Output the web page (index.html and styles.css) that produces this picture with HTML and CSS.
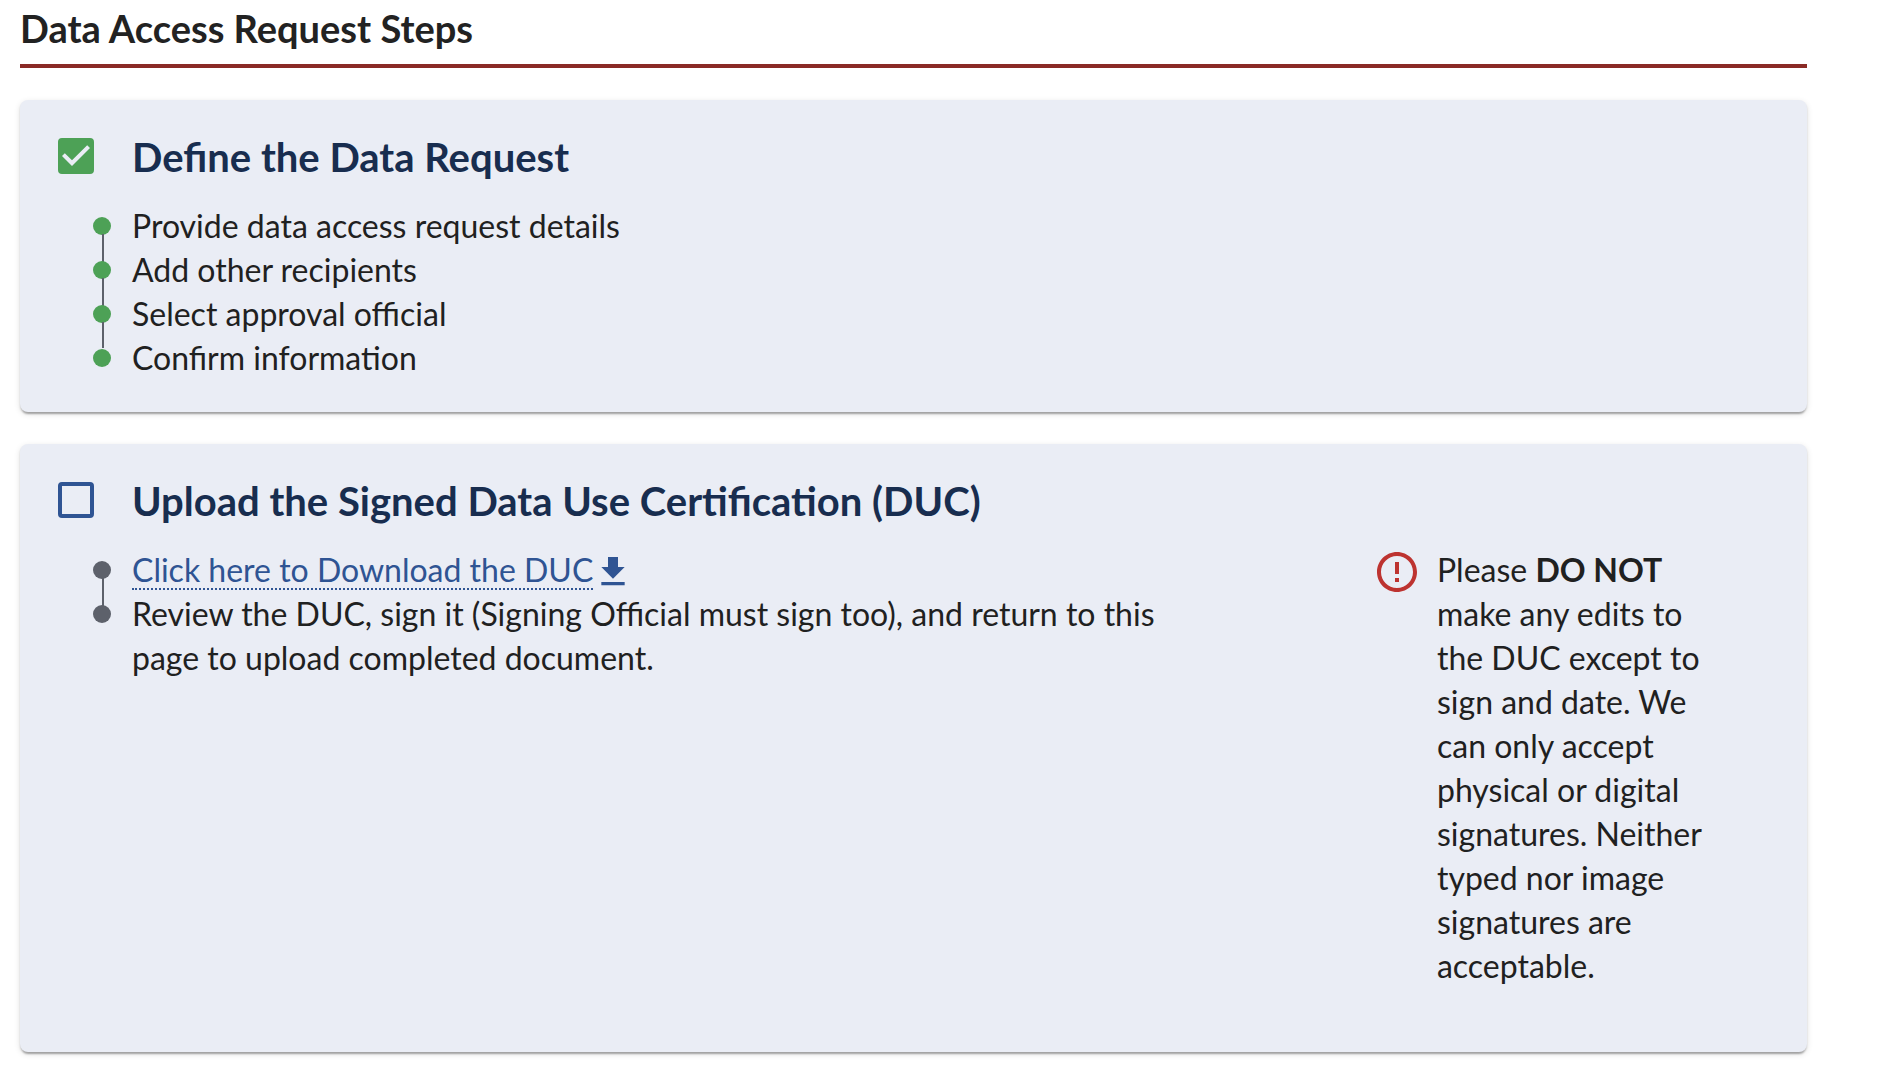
FILE: index.html
```html
<!DOCTYPE html>
<html lang="en">
<head>
<meta charset="utf-8">
<meta name="viewport" content="width=device-width, initial-scale=1">
<title>Data Access Request Steps</title>
<link rel="stylesheet" href="styles.css">
</head>
<body>
<main class="page">
  <h1 class="page-title">Data Access Request Steps</h1>

  <section class="card">
    <div class="card-head">
      <span class="check">
        <input class="check-input" type="checkbox" id="step-define" checked>
        <svg class="check-mark" viewBox="0 0 24 24" aria-hidden="true"><path d="M10 17l-5-5 1.41-1.41L10 14.17l7.59-7.59L19 8z"/></svg>
      </span>
      <h2 class="card-title"><label for="step-define">Define the Data Request</label></h2>
    </div>
    <ul class="steps steps-done">
      <li>Provide data access request details</li>
      <li>Add other recipients</li>
      <li>Select approval official</li>
      <li>Confirm information</li>
    </ul>
  </section>

  <section class="card">
    <div class="card-head">
      <span class="check">
        <input class="check-input" type="checkbox" id="step-upload">
        <svg class="check-mark" viewBox="0 0 24 24" aria-hidden="true"><path d="M10 17l-5-5 1.41-1.41L10 14.17l7.59-7.59L19 8z"/></svg>
      </span>
      <h2 class="card-title"><label for="step-upload">Upload the Signed Data Use Certification (DUC)</label></h2>
    </div>
    <div class="card-columns">
      <ul class="steps">
        <li>
          <div class="download">
            <a class="link" href="#">Click here to Download the DUC</a>
            <svg class="download-icon" viewBox="0 0 24 24" aria-hidden="true"><path d="M5 20h14v-2H5v2zM19 9h-4V3H9v6H5l7 7 7-7z"/></svg>
          </div>
        </li>
        <li>Review the DUC, sign it (Signing Official must sign too), and return to this page to upload completed document.</li>
      </ul>
      <aside class="notice">
        <svg class="notice-icon" viewBox="0 0 24 24" aria-hidden="true"><path d="M11 15h2v2h-2v-2zm0-8h2v6h-2V7zm.99-5C6.47 2 2 6.48 2 12s4.47 10 9.99 10C17.52 22 22 17.52 22 12S17.52 2 11.99 2zM12 20c-4.42 0-8-3.58-8-8s3.58-8 8-8 8 3.58 8 8-3.58 8-8 8z"/></svg>
        <p class="notice-text">Please <strong>DO NOT</strong> make any edits to the DUC except to sign and date. We can only accept physical or digital signatures. Neither typed nor image signatures are acceptable.</p>
      </aside>
    </div>
  </section>
</main>
</body>
</html>
```
FILE: styles.css
```css
* {
  box-sizing: border-box;
}

body {
  margin: 0;
  background: #fff;
  color: #1f2121;
  font-family: Lato, "Liberation Sans", sans-serif;
  font-size: 32px;
  line-height: 44px;
}

.page {
  display: flex;
  flex-direction: column;
  gap: 32px;
  padding: 0 81px 24px 20px;
}

.page-title {
  margin: 0;
  padding: 4px 0 12px;
  border-bottom: 4px solid #8a2a26;
  color: #222;
  font-size: 38px;
  line-height: 48px;
}

.card {
  display: flex;
  flex-direction: column;
  gap: 22px;
  padding: 32px;
  border-radius: 8px;
  background: #eaedf5;
  box-shadow:
    0 4px 2px -2px rgba(0, 0, 0, 0.2),
    0 2px 2px rgba(0, 0, 0, 0.14),
    0 2px 6px rgba(0, 0, 0, 0.12);
}

.card-head {
  display: flex;
  gap: 32px;
}

.check {
  display: grid;
  flex: none;
  width: 48px;
  height: 48px;
  place-items: center;
}

.check-input,
.check-mark {
  grid-area: 1 / 1;
}

.check-input {
  width: 36px;
  height: 36px;
  margin: 0;
  border: 4px solid #2f5493;
  border-radius: 4px;
  appearance: none;
}

.check-input:checked {
  border-color: #4da156;
  background: #4da156;
}

.check-mark {
  width: 48px;
  height: 48px;
  fill: #eaedf5;
  pointer-events: none;
}

.card-title {
  margin: 0;
  color: #182d4f;
  font-size: 40px;
  line-height: 50px;
}

.card-columns {
  display: grid;
  grid-template-columns: 23fr 7fr;
}

.steps {
  margin: 0;
  padding: 0 12% 0 41px;
  list-style: none;
  color: #1f2121;
}

.steps li {
  position: relative;
  display: flex;
  gap: 21px;
}

.steps li::before {
  content: "";
  flex: none;
  width: 18px;
  height: 18px;
  margin-top: 13px;
  border-radius: 50%;
  background: #5d616b;
}

.steps-done li::before {
  background: #4da156;
}

/* Connector running from one bullet to the next */
.steps li:not(:last-child)::after {
  content: "";
  position: absolute;
  top: 30px;
  left: 9px;
  width: 2px;
  height: calc(100% - 16px);
  background: #5d616b;
}

.steps-done li:nth-last-child(2)::after {
  height: calc(100% - 18px);
}

.download {
  display: flex;
  align-items: flex-start;
}

.link {
  height: 42px;
  border-bottom: 2px dotted #2f5493;
  color: #2f5493;
  text-decoration: none;
}

.download-icon {
  width: 40px;
  height: 40px;
  margin-top: 4px;
  fill: #2f5493;
}

.notice {
  display: flex;
  gap: 16px;
  padding: 0 48px 32px 0;
}

.notice-icon {
  flex: none;
  width: 48px;
  height: 48px;
  fill: #bd3330;
}

.notice-text {
  margin: 0;
}
```
